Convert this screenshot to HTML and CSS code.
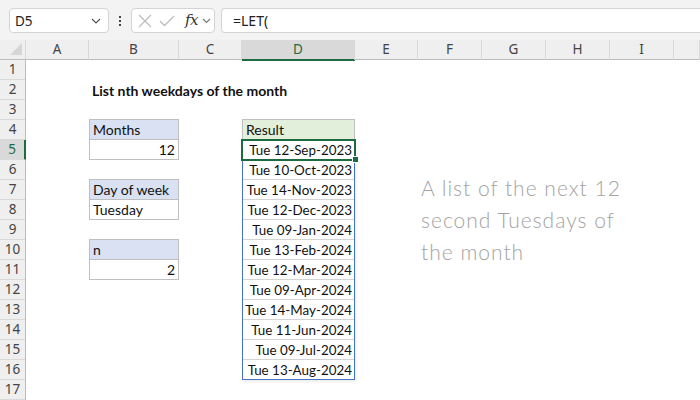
FILE: index.html
```html
<!DOCTYPE html>
<html>
<head>
<meta charset="utf-8">
<link rel="stylesheet" href="styles.css">
</head>
<body>
<div class="app">
  <div class="topbar">
    <div class="namebox">
      <span class="nb-text">D5</span>
      <svg class="chev" width="10" height="6" viewBox="0 0 10 6"><path d="M1 1 L5 5 L9 1" fill="none" stroke="#555" stroke-width="1.2"/></svg>
    </div>
    <div class="dots"><i></i><i></i><i></i></div>
    <div class="fxbox">
      <svg class="ico-x" width="14" height="14" viewBox="0 0 14 14"><path d="M1 1 L13 13 M13 1 L1 13" stroke="#bdbdbd" stroke-width="1.3" fill="none"/></svg>
      <svg class="ico-check" width="16" height="12" viewBox="0 0 16 12"><path d="M1 6 L5.5 10.5 L15 1" stroke="#bdbdbd" stroke-width="1.3" fill="none"/></svg>
      <span class="fx">fx</span>
      <svg class="chev-s" width="9" height="6" viewBox="0 0 9 6"><path d="M1 1 L4.5 4.5 L8 1" fill="none" stroke="#777" stroke-width="1.1"/></svg>
    </div>
    <div class="formula">=LET(</div>
  </div>

  <div class="sheet">
    <div class="corner"><svg width="12" height="12" viewBox="0 0 12 12"><path d="M12 0 L12 12 L0 12 Z" fill="#d6d6d6"/></svg></div>
    <div class="colheads">
      <div class="ch">A</div>
      <div class="ch">B</div>
      <div class="ch">C</div>
      <div class="ch sel">D</div>
      <div class="ch">E</div>
      <div class="ch">F</div>
      <div class="ch">G</div>
      <div class="ch">H</div>
      <div class="ch">I</div>
      <div class="ch"></div>
    </div>
    <div class="rowheads">
      <div class="rh">1</div>
      <div class="rh">2</div>
      <div class="rh">3</div>
      <div class="rh">4</div>
      <div class="rh sel">5</div>
      <div class="rh">6</div>
      <div class="rh">7</div>
      <div class="rh">8</div>
      <div class="rh">9</div>
      <div class="rh">10</div>
      <div class="rh">11</div>
      <div class="rh">12</div>
      <div class="rh">13</div>
      <div class="rh">14</div>
      <div class="rh">15</div>
      <div class="rh">16</div>
      <div class="rh">17</div>
    </div>
    <div class="cells">
      <div class="title">List nth weekdays of the month</div>

      <div class="lbl lbl-months">Months</div>
      <div class="val val-months num">12</div>

      <div class="lbl lbl-dow">Day of week</div>
      <div class="val val-dow">Tuesday</div>

      <div class="lbl lbl-n">n</div>
      <div class="val val-n num">2</div>

      <div class="res-head">Result</div>
      <div class="res-list">
        <div class="res active">Tue 12-Sep-2023<span class="handle"></span></div>
        <div class="res">Tue 10-Oct-2023</div>
        <div class="res">Tue 14-Nov-2023</div>
        <div class="res">Tue 12-Dec-2023</div>
        <div class="res">Tue 09-Jan-2024</div>
        <div class="res">Tue 13-Feb-2024</div>
        <div class="res">Tue 12-Mar-2024</div>
        <div class="res">Tue 09-Apr-2024</div>
        <div class="res">Tue 14-May-2024</div>
        <div class="res">Tue 11-Jun-2024</div>
        <div class="res">Tue 09-Jul-2024</div>
        <div class="res">Tue 13-Aug-2024</div>
      </div>

      <div class="note">A list of the next 12<br>second Tuesdays of<br>the month</div>
    </div>
  </div>
</div>
</body>
</html>
```

FILE: styles.css
```css
* { box-sizing: border-box; }
html, body { margin: 0; padding: 0; }
body {
  width: 700px;
  height: 400px;
  overflow: hidden;
  background: #fff;
  font-family: "Noto Sans", sans-serif;
}
.app { display: flex; flex-direction: column; height: 400px; }

/* ---------- top formula bar ---------- */
.topbar {
  height: 40px;
  background: #f3f3f3;
  display: flex;
  align-items: flex-start;
  padding: 8px 0 0 9px;
  flex: none;
}
.namebox {
  width: 100px;
  height: 25px;
  background: #fff;
  border: 1px solid #d4d4d4;
  border-radius: 4px;
  display: flex;
  align-items: center;
  justify-content: space-between;
  padding: 0 7px 0 5px;
}
.nb-text { font-size: 13.5px; color: #222; }
.dots {
  width: 22px;
  height: 25px;
  display: flex;
  flex-direction: column;
  align-items: center;
  justify-content: center;
  gap: 2px;
}
.dots i { display: block; width: 2px; height: 2px; background: #444; }
.fxbox {
  width: 84px;
  height: 25px;
  background: #fff;
  border: 1px solid #d4d4d4;
  border-radius: 4px;
  display: flex;
  align-items: center;
  padding-left: 6px;
}
.ico-x { margin-right: 7px; }
.ico-check { margin-right: 10px; }
.fx {
  font-family: "DejaVu Serif", serif;
  font-style: italic;
  font-size: 15px;
  color: #333;
  letter-spacing: -0.5px;
  margin-right: 4px;
  line-height: 1;
}
.formula {
  margin-left: 6px;
  flex: 1;
  height: 25px;
  background: #fff;
  border: 1px solid #d4d4d4;
  border-right: none;
  border-radius: 4px 0 0 4px;
  padding-left: 11px;
  font-size: 14px;
  line-height: 23px;
  color: #222;
}

/* ---------- sheet ---------- */
.sheet {
  flex: 1;
  display: grid;
  grid-template-columns: 26px 1fr;
  grid-template-rows: 20px 1fr;
}
.corner {
  background: #efefef;
  border-right: 1px solid #d8d8d8;
  border-bottom: 1px solid #bcbcbc;
  display: flex;
  align-items: flex-end;
  justify-content: flex-end;
  padding: 0 3px 4px 0;
}
.colheads {
  display: grid;
  grid-template-columns: 63px 90px 63px 113px 63px 64px 64px 64px 64px 1fr;
  background: #efefef;
  border-bottom: 1px solid #bcbcbc;
}
.ch {
  border-right: 1px solid #d8d8d8;
  text-align: center;
  font-size: 13.5px;
  line-height: 19px;
  color: #444;
}
.ch.sel {
  background: #d9d9d9;
  color: #1d6b40;
  border-bottom: 2px solid #1d6b40;
  margin-bottom: -1px;
}
.rowheads {
  display: flex;
  flex-direction: column;
  background: #efefef;
  border-right: 1px solid #bcbcbc;
}
.rh {
  height: 20px;
  flex: none;
  border-bottom: 1px solid #dadada;
  text-align: center;
  font-size: 13.5px;
  line-height: 19px;
  color: #444;
}
.rh.sel {
  background: #d9d9d9;
  color: #1d6b40;
  border-right: 2px solid #1d6b40;
  margin-right: -1px;
}

.cells {
  display: grid;
  grid-template-columns: 63px 90px 63px 113px 63px 64px 64px 64px 64px 1fr;
  grid-template-rows: repeat(17, 20px);
  font-family: "Lato", sans-serif;
  font-size: 14px;
  color: #111;
}
.title {
  grid-row: 2;
  grid-column: 2 / 6;
  font-weight: bold;
  padding-left: 3px;
  line-height: 21px;
  white-space: nowrap;
}
.lbl, .val {
  grid-column: 2;
  border: 1px solid #bfbfbf;
  padding: 0 3px;
  line-height: 19px;
  white-space: nowrap;
}
.lbl { background: #d9e1f2; margin-top: -1px; }
.val { border-top: none; }
.num { text-align: right; }
.lbl-months { grid-row: 4; }
.val-months { grid-row: 5; }
.lbl-dow { grid-row: 7; }
.val-dow { grid-row: 8; }
.lbl-n { grid-row: 10; }
.val-n { grid-row: 11; }

.res-head {
  grid-row: 4;
  grid-column: 4;
  background: #e2efda;
  border: 1px solid #bfbfbf;
  margin-top: -1px;
  padding: 0 3px;
  line-height: 19px;
}
.res-list {
  grid-row: 5 / 17;
  grid-column: 4;
  border: 1px solid #4472c4;
  border-top: none;
  display: flex;
  flex-direction: column;
  box-shadow: 1px 2px 3px rgba(0,0,0,0.08);
}
.res {
  height: 20px;
  flex: none;
  border-bottom: 1px solid #d4d4d4;
  text-align: right;
  padding-right: 2px;
  font-size: 13.4px;
  line-height: 20px;
  white-space: nowrap;
  position: relative;
}
.res:last-child { border-bottom: none; height: 19px; }
.res.active {
  outline: 2px solid #1d6b40;
  outline-offset: -1px;
  margin: 0 -1px;
  padding-right: 3px;
  z-index: 2;
}
.handle {
  position: absolute;
  right: -4px;
  bottom: -4px;
  width: 7px;
  height: 7px;
  background: #1d6b40;
  border: 1px solid #fff;
}
.note {
  grid-row: 7 / 13;
  grid-column: 6 / 11;
  padding: 0 0 0 3px;
  margin-top: -8px;
  font-family: "Lato", sans-serif;
  font-weight: 300;
  font-size: 21px;
  line-height: 32px;
  letter-spacing: 1px;
  color: #a3a3a3;
  white-space: nowrap;
}
```
